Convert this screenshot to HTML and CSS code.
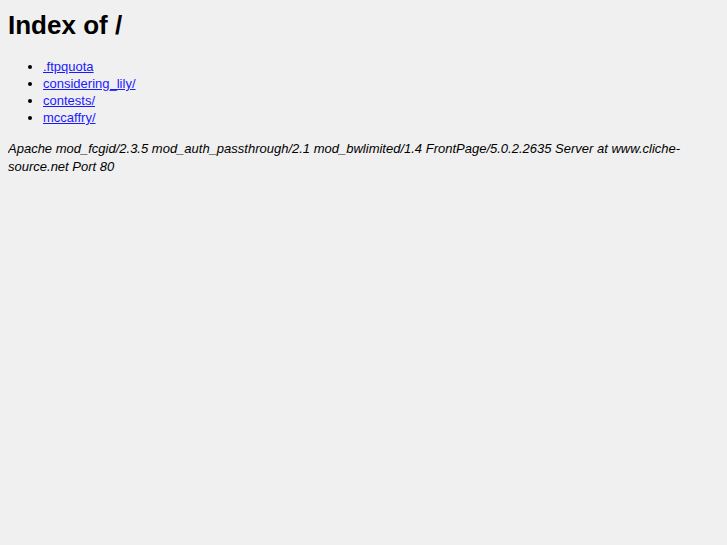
FILE: index.html
```html
<!DOCTYPE html>
<html>
<head>
    <meta charset="UTF-8">
    <title>Index of /</title>
    <link rel="stylesheet" href="styles.css">
</head>
<body>
    <h1>Index of /</h1>
    <ul>
        <li><a href="/.ftpquota">.ftpquota</a></li>
        <li><a href="/considering_lily/">considering_lily/</a></li>
        <li><a href="/contests/">contests/</a></li>
        <li><a href="/mccaffry/">mccaffry/</a></li>
    </ul>
    <address>Apache mod_fcgid/2.3.5 mod_auth_passthrough/2.1 mod_bwlimited/1.4 FrontPage/5.0.2.2635 Server at www.cliche-source.net Port 80</address>
</body>
</html>
```

FILE: styles.css
```css
body {
    margin: 8px;
    background-color: #f0f0f0;
    color: #000;
    font-family: "Liberation Sans", Arial, sans-serif;
    font-size: 13px;
    line-height: 17px;
}
h1 {
    font-size: 26px;
    line-height: 30px;
    margin: 2px 0 18px;
}
ul {
    margin: 0 0 14px;
    padding-left: 35px;
}
a {
    color: #1a1aff;
}
address {
    font-style: italic;
    line-height: 18px;
}
```
